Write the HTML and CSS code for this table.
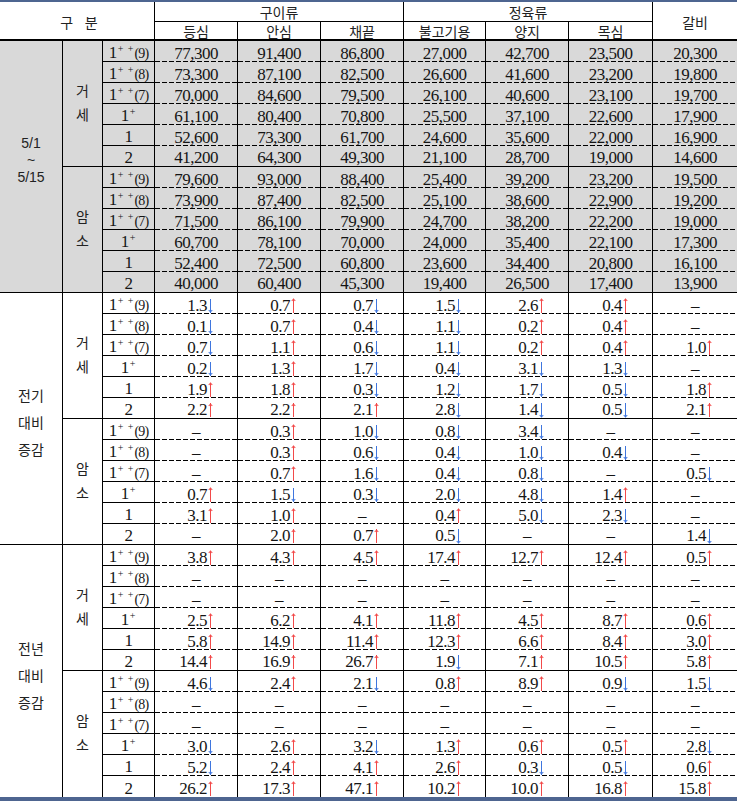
FILE: index.html
```html
<!DOCTYPE html>
<html lang="ko">
<head>
<meta charset="utf-8">
<title>부위별 가격</title>
<link rel="stylesheet" href="styles.css">
</head>
<body>
<table class="t">
<colgroup>
<col class="w63"><col class="w40"><col class="w52"><col class="w83"><col class="w83"><col class="w83"><col class="w82"><col class="w83"><col class="w84"><col class="w84">
</colgroup>
<thead>
<tr class="h1"><th colspan="3" rowspan="2" class="hk">구&nbsp;&nbsp;&nbsp;분</th><th colspan="3" class="hg">구이류</th><th colspan="3" class="hg">정육류</th><th rowspan="2" class="hk hl">갈비</th></tr>
<tr class="h2"><th>등심</th><th>안심</th><th>채끝</th><th>불고기용</th><th>양지</th><th>목심</th></tr>
</thead>
<tbody class="s1">
<tr><td rowspan="12" class="sec dt">5/1<br>~<br>5/15</td><td rowspan="6" class="grp">거<br>세</td><td class="g">1<sup>+ +</sup><span class="p">(9)</span></td><td class="v">77,300</td><td class="v">91,400</td><td class="v">86,800</td><td class="v">27,000</td><td class="v">42,700</td><td class="v">23,500</td><td class="v">20,300</td></tr>
<tr><td class="g">1<sup>+ +</sup><span class="p">(8)</span></td><td class="v">73,300</td><td class="v">87,100</td><td class="v">82,500</td><td class="v">26,600</td><td class="v">41,600</td><td class="v">23,200</td><td class="v">19,800</td></tr>
<tr><td class="g">1<sup>+ +</sup><span class="p">(7)</span></td><td class="v">70,000</td><td class="v">84,600</td><td class="v">79,500</td><td class="v">26,100</td><td class="v">40,600</td><td class="v">23,100</td><td class="v">19,700</td></tr>
<tr><td class="g">1<sup>+</sup></td><td class="v">61,100</td><td class="v">80,400</td><td class="v">70,800</td><td class="v">25,500</td><td class="v">37,100</td><td class="v">22,600</td><td class="v">17,900</td></tr>
<tr><td class="g">1</td><td class="v">52,600</td><td class="v">73,300</td><td class="v">61,700</td><td class="v">24,600</td><td class="v">35,600</td><td class="v">22,000</td><td class="v">16,900</td></tr>
<tr class="e"><td class="g">2</td><td class="v">41,200</td><td class="v">64,300</td><td class="v">49,300</td><td class="v">21,100</td><td class="v">28,700</td><td class="v">19,000</td><td class="v">14,600</td></tr>
<tr><td rowspan="6" class="grp">암<br>소</td><td class="g">1<sup>+ +</sup><span class="p">(9)</span></td><td class="v">79,600</td><td class="v">93,000</td><td class="v">88,400</td><td class="v">25,400</td><td class="v">39,200</td><td class="v">23,200</td><td class="v">19,500</td></tr>
<tr><td class="g">1<sup>+ +</sup><span class="p">(8)</span></td><td class="v">73,900</td><td class="v">87,400</td><td class="v">82,500</td><td class="v">25,100</td><td class="v">38,600</td><td class="v">22,900</td><td class="v">19,200</td></tr>
<tr><td class="g">1<sup>+ +</sup><span class="p">(7)</span></td><td class="v">71,500</td><td class="v">86,100</td><td class="v">79,900</td><td class="v">24,700</td><td class="v">38,200</td><td class="v">22,200</td><td class="v">19,000</td></tr>
<tr><td class="g">1<sup>+</sup></td><td class="v">60,700</td><td class="v">78,100</td><td class="v">70,000</td><td class="v">24,000</td><td class="v">35,400</td><td class="v">22,100</td><td class="v">17,300</td></tr>
<tr><td class="g">1</td><td class="v">52,400</td><td class="v">72,500</td><td class="v">60,800</td><td class="v">23,600</td><td class="v">34,400</td><td class="v">20,800</td><td class="v">16,100</td></tr>
<tr class="e"><td class="g">2</td><td class="v">40,000</td><td class="v">60,400</td><td class="v">45,300</td><td class="v">19,400</td><td class="v">26,500</td><td class="v">17,400</td><td class="v">13,900</td></tr>
</tbody>
<tbody class="ch">
<tr><td rowspan="12" class="sec">전기<br>대비<br>증감</td><td rowspan="6" class="grp">거<br>세</td><td class="g">1<sup>+ +</sup><span class="p">(9)</span></td><td class="v">1.3<i class="d"></i></td><td class="v">0.7<i class="u"></i></td><td class="v">0.7<i class="d"></i></td><td class="v">1.5<i class="d"></i></td><td class="v">2.6<i class="u"></i></td><td class="v">0.4<i class="u"></i></td><td class="v z">–</td></tr>
<tr><td class="g">1<sup>+ +</sup><span class="p">(8)</span></td><td class="v">0.1<i class="d"></i></td><td class="v">0.7<i class="u"></i></td><td class="v">0.4<i class="d"></i></td><td class="v">1.1<i class="d"></i></td><td class="v">0.2<i class="u"></i></td><td class="v">0.4<i class="u"></i></td><td class="v z">–</td></tr>
<tr><td class="g">1<sup>+ +</sup><span class="p">(7)</span></td><td class="v">0.7<i class="d"></i></td><td class="v">1.1<i class="u"></i></td><td class="v">0.6<i class="d"></i></td><td class="v">1.1<i class="d"></i></td><td class="v">0.2<i class="u"></i></td><td class="v">0.4<i class="u"></i></td><td class="v">1.0<i class="u"></i></td></tr>
<tr><td class="g">1<sup>+</sup></td><td class="v">0.2<i class="d"></i></td><td class="v">1.3<i class="u"></i></td><td class="v">1.7<i class="d"></i></td><td class="v">0.4<i class="d"></i></td><td class="v">3.1<i class="d"></i></td><td class="v">1.3<i class="d"></i></td><td class="v z">–</td></tr>
<tr><td class="g">1</td><td class="v">1.9<i class="u"></i></td><td class="v">1.8<i class="u"></i></td><td class="v">0.3<i class="d"></i></td><td class="v">1.2<i class="d"></i></td><td class="v">1.7<i class="d"></i></td><td class="v">0.5<i class="d"></i></td><td class="v">1.8<i class="u"></i></td></tr>
<tr class="e"><td class="g">2</td><td class="v">2.2<i class="u"></i></td><td class="v">2.2<i class="u"></i></td><td class="v">2.1<i class="u"></i></td><td class="v">2.8<i class="d"></i></td><td class="v">1.4<i class="d"></i></td><td class="v">0.5<i class="d"></i></td><td class="v">2.1<i class="u"></i></td></tr>
<tr><td rowspan="6" class="grp">암<br>소</td><td class="g">1<sup>+ +</sup><span class="p">(9)</span></td><td class="v z">–</td><td class="v">0.3<i class="u"></i></td><td class="v">1.0<i class="d"></i></td><td class="v">0.8<i class="d"></i></td><td class="v">3.4<i class="d"></i></td><td class="v z">–</td><td class="v z">–</td></tr>
<tr><td class="g">1<sup>+ +</sup><span class="p">(8)</span></td><td class="v z">–</td><td class="v">0.3<i class="u"></i></td><td class="v">0.6<i class="d"></i></td><td class="v">0.4<i class="d"></i></td><td class="v">1.0<i class="d"></i></td><td class="v">0.4<i class="d"></i></td><td class="v z">–</td></tr>
<tr><td class="g">1<sup>+ +</sup><span class="p">(7)</span></td><td class="v z">–</td><td class="v">0.7<i class="u"></i></td><td class="v">1.6<i class="d"></i></td><td class="v">0.4<i class="d"></i></td><td class="v">0.8<i class="d"></i></td><td class="v z">–</td><td class="v">0.5<i class="d"></i></td></tr>
<tr><td class="g">1<sup>+</sup></td><td class="v">0.7<i class="u"></i></td><td class="v">1.5<i class="d"></i></td><td class="v">0.3<i class="d"></i></td><td class="v">2.0<i class="d"></i></td><td class="v">4.8<i class="d"></i></td><td class="v">1.4<i class="u"></i></td><td class="v z">–</td></tr>
<tr><td class="g">1</td><td class="v">3.1<i class="u"></i></td><td class="v">1.0<i class="u"></i></td><td class="v z">–</td><td class="v">0.4<i class="u"></i></td><td class="v">5.0<i class="d"></i></td><td class="v">2.3<i class="d"></i></td><td class="v z">–</td></tr>
<tr class="e"><td class="g">2</td><td class="v z">–</td><td class="v">2.0<i class="u"></i></td><td class="v">0.7<i class="u"></i></td><td class="v">0.5<i class="d"></i></td><td class="v z">–</td><td class="v z">–</td><td class="v">1.4<i class="d"></i></td></tr>
</tbody>
<tbody class="ch lastsec">
<tr><td rowspan="12" class="sec">전년<br>대비<br>증감</td><td rowspan="6" class="grp">거<br>세</td><td class="g">1<sup>+ +</sup><span class="p">(9)</span></td><td class="v">3.8<i class="u"></i></td><td class="v">4.3<i class="u"></i></td><td class="v">4.5<i class="u"></i></td><td class="v">17.4<i class="u"></i></td><td class="v">12.7<i class="u"></i></td><td class="v">12.4<i class="u"></i></td><td class="v">0.5<i class="u"></i></td></tr>
<tr><td class="g">1<sup>+ +</sup><span class="p">(8)</span></td><td class="v z">–</td><td class="v z">–</td><td class="v z">–</td><td class="v z">–</td><td class="v z">–</td><td class="v z">–</td><td class="v z">–</td></tr>
<tr><td class="g">1<sup>+ +</sup><span class="p">(7)</span></td><td class="v z">–</td><td class="v z">–</td><td class="v z">–</td><td class="v z">–</td><td class="v z">–</td><td class="v z">–</td><td class="v z">–</td></tr>
<tr><td class="g">1<sup>+</sup></td><td class="v">2.5<i class="u"></i></td><td class="v">6.2<i class="u"></i></td><td class="v">4.1<i class="u"></i></td><td class="v">11.8<i class="u"></i></td><td class="v">4.5<i class="u"></i></td><td class="v">8.7<i class="u"></i></td><td class="v">0.6<i class="u"></i></td></tr>
<tr><td class="g">1</td><td class="v">5.8<i class="u"></i></td><td class="v">14.9<i class="u"></i></td><td class="v">11.4<i class="u"></i></td><td class="v">12.3<i class="u"></i></td><td class="v">6.6<i class="u"></i></td><td class="v">8.4<i class="u"></i></td><td class="v">3.0<i class="u"></i></td></tr>
<tr class="e"><td class="g">2</td><td class="v">14.4<i class="u"></i></td><td class="v">16.9<i class="u"></i></td><td class="v">26.7<i class="u"></i></td><td class="v">1.9<i class="d"></i></td><td class="v">7.1<i class="u"></i></td><td class="v">10.5<i class="u"></i></td><td class="v">5.8<i class="u"></i></td></tr>
<tr><td rowspan="6" class="grp gl">암<br>소</td><td class="g">1<sup>+ +</sup><span class="p">(9)</span></td><td class="v">4.6<i class="d"></i></td><td class="v">2.4<i class="u"></i></td><td class="v">2.1<i class="d"></i></td><td class="v">0.8<i class="u"></i></td><td class="v">8.9<i class="u"></i></td><td class="v">0.9<i class="d"></i></td><td class="v">1.5<i class="d"></i></td></tr>
<tr><td class="g">1<sup>+ +</sup><span class="p">(8)</span></td><td class="v z">–</td><td class="v z">–</td><td class="v z">–</td><td class="v z">–</td><td class="v z">–</td><td class="v z">–</td><td class="v z">–</td></tr>
<tr><td class="g">1<sup>+ +</sup><span class="p">(7)</span></td><td class="v z">–</td><td class="v z">–</td><td class="v z">–</td><td class="v z">–</td><td class="v z">–</td><td class="v z">–</td><td class="v z">–</td></tr>
<tr><td class="g">1<sup>+</sup></td><td class="v">3.0<i class="d"></i></td><td class="v">2.6<i class="u"></i></td><td class="v">3.2<i class="d"></i></td><td class="v">1.3<i class="u"></i></td><td class="v">0.6<i class="u"></i></td><td class="v">0.5<i class="u"></i></td><td class="v">2.8<i class="d"></i></td></tr>
<tr><td class="g">1</td><td class="v">5.2<i class="d"></i></td><td class="v">2.4<i class="u"></i></td><td class="v">4.1<i class="u"></i></td><td class="v">2.6<i class="u"></i></td><td class="v">0.3<i class="d"></i></td><td class="v">0.5<i class="d"></i></td><td class="v">0.6<i class="u"></i></td></tr>
<tr class="e"><td class="g">2</td><td class="v">26.2<i class="u"></i></td><td class="v">17.3<i class="u"></i></td><td class="v">47.1<i class="u"></i></td><td class="v">10.2<i class="u"></i></td><td class="v">10.0<i class="u"></i></td><td class="v">16.8<i class="u"></i></td><td class="v">15.8<i class="u"></i></td></tr>
</tbody>
</table>
</body>
</html>
```

FILE: styles.css
```css
html, body {
  margin: 0;
  padding: 0;
  background: #fff;
}

.t {
  border-collapse: separate;
  border-spacing: 0;
  table-layout: fixed;
  width: 737px;
  border-top: 2px solid #4e6590;
  border-bottom: 4px solid #4e6590;
  color: #151515;
}

.w63 { width: 63px; }
.w40 { width: 40px; }
.w52 { width: 52px; }
.w82 { width: 82px; }
.w83 { width: 83px; }
.w84 { width: 84px; }

th, td {
  padding: 0;
  border-right: 1px solid #000;
  font-weight: normal;
  text-align: center;
  vertical-align: middle;
  white-space: nowrap;
}

thead th {
  font-family: "Noto Sans CJK KR", "Noto Sans", sans-serif;
  font-size: 14px;
  line-height: 16px;
  color: #222;
}

.h1 { height: 20px; }
.h2 { height: 19px; }

.h1 .hg { border-bottom: 1px solid #000; }
.h1 .hk { border-bottom: 2px solid #000; padding-top: 2px; padding-left: 4px; }
.h1 .hl { border-right: none; padding-left: 0; }
.h2 th { border-bottom: 2px solid #000; }

tbody tr { height: 21px; }

tbody td {
  font-family: "Liberation Serif", "DejaVu Serif", serif;
  font-size: 17px;
  letter-spacing: -0.5px;
  line-height: 17px;
  padding-top: 3px;
  height: 20px;
  box-sizing: border-box;
}

tbody td:last-child { border-right: none; }

.s1 td { background-color: #d9d9d9; }

td.v {
  background-image: linear-gradient(to right, #000 0 5px, transparent 5px 7px);
  background-size: 7px 1px;
  background-repeat: repeat-x;
  background-position: 0 100%;
}

tr.e td {
  border-bottom: 1px solid #000;
  background-image: none;
}

td.g {
  border-bottom: 1px solid #000;
}

td.g sup {
  font-size: 10px;
  line-height: 0;
  vertical-align: 6px;
  letter-spacing: 1px;
  margin-left: 1px;
}

td.g .p {
  font-size: 14px;
  line-height: 0;
  letter-spacing: -0.8px;
}

td.sec, td.grp {
  border-bottom: 1px solid #000;
  font-family: "Noto Sans CJK KR", "Noto Sans", sans-serif;
  font-size: 14px;
  letter-spacing: 0;
  color: #222;
  padding-top: 0;
  height: auto;
}

td.grp { line-height: 24px; padding-bottom: 4px; }
td.sec { line-height: 27px; padding-top: 8px; }

td.dt {
  font-family: "Liberation Sans", Arial, sans-serif;
  font-size: 14px;
  line-height: 17px;
  padding-top: 0;
  padding-bottom: 12px;
}

.lastsec tr:last-child td,
.lastsec td.sec,
.lastsec td.gl { border-bottom: none; }

.ch td.v {
  text-align: right;
  padding-right: 24px;
}

.ch td.v:last-child { padding-right: 25px; }

.ch td.z {
  text-align: center;
  padding-right: 0;
}

.ch td.z:last-child { padding-right: 0; }

.u, .d {
  display: inline-block;
  position: relative;
  width: 5px;
  height: 14px;
  margin-left: 1px;
  vertical-align: -2px;
}

.u { color: #f24a4a; }
.d { color: #3f76de; }

.u::before, .d::before {
  content: "";
  position: absolute;
  left: 2px;
  top: 0;
  width: 1px;
  height: 14px;
  background: currentColor;
}

.u::after, .d::after {
  content: "";
  position: absolute;
  left: 1px;
  width: 2px;
  height: 2px;
  transform: rotate(45deg);
}

.u::after {
  top: 0.5px;
  border-left: 1px solid currentColor;
  border-top: 1px solid currentColor;
}

.d::after {
  bottom: 0.5px;
  border-right: 1px solid currentColor;
  border-bottom: 1px solid currentColor;
}
```
